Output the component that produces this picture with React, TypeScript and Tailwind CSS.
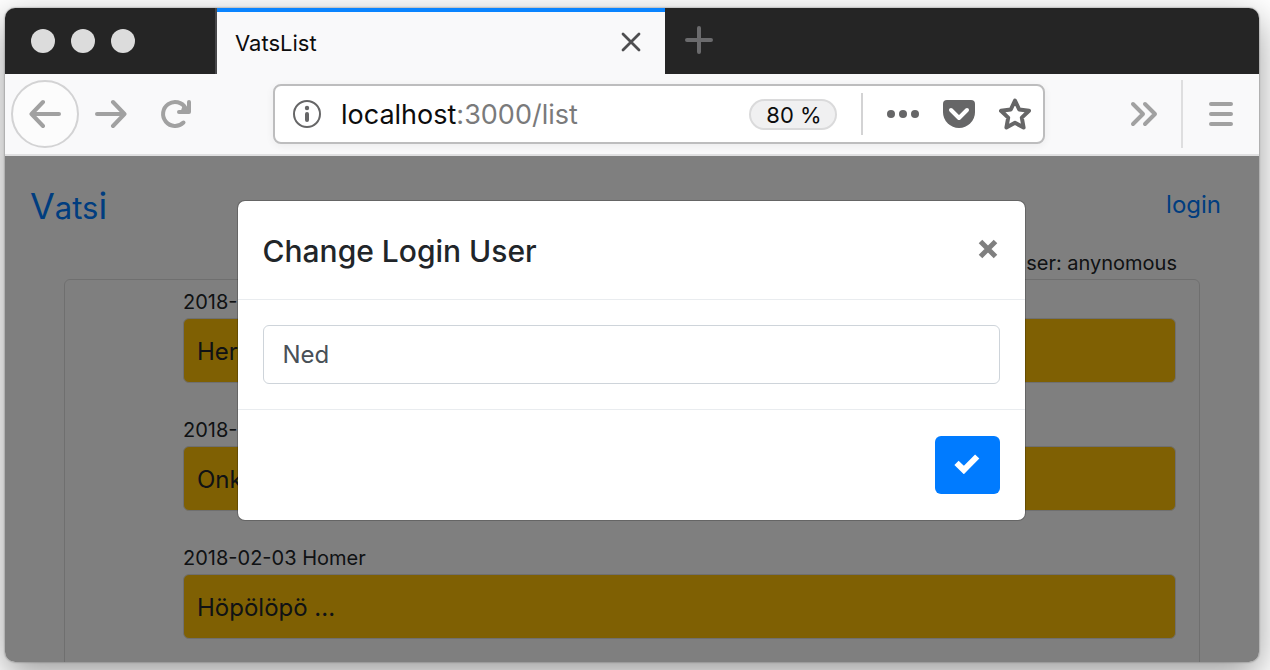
import React from "react";

const entries = [
  { meta: "2018-", text: "Her" },
  { meta: "2018-", text: "Onk" },
  { meta: "2018-02-03 Homer", text: "Höpölöpö ..." },
];

function TabBar() {
  return (
    <header className="flex h-[66px] shrink-0 bg-[#252525]">
      <div className="flex w-[212px] shrink-0 items-center gap-4 border-r-2 border-[#48484a] pl-[26px]">
        <span className="size-6 rounded-full bg-[#dcdcdc]" />
        <span className="size-6 rounded-full bg-[#dcdcdc]" />
        <span className="size-6 rounded-full bg-[#dcdcdc]" />
      </div>
      <div className="flex w-[448px] items-center justify-between border-t-4 border-[#0a84ff] bg-[#f9f9fa] pr-6 pb-0.5 pl-[18px]">
        <span className="pt-0.5 text-[22px] leading-8 text-[#0c0c0d]">VatsList</span>
        <button type="button" aria-label="Close tab" className="size-5">
          <svg viewBox="0 0 20 20" className="size-5" fill="none" stroke="#4e4e50" strokeWidth="2.8" strokeLinecap="round">
            <path d="M2 2l16 16M18 2L2 18" />
          </svg>
        </button>
      </div>
      <button type="button" aria-label="New tab" className="ml-5 flex items-center pb-0.5">
        <svg viewBox="0 0 28 28" className="size-7" fill="none" stroke="#6b6b6d" strokeWidth="4" strokeLinecap="round">
          <path d="M14 2v24M2 14h24" />
        </svg>
      </button>
    </header>
  );
}

function Toolbar() {
  return (
    <nav className="flex h-[82px] shrink-0 items-center border-b-2 border-[#e0e0e1] bg-[#f9f9fa] px-1.5">
      <button type="button" aria-label="Back" className="flex size-[68px] shrink-0 items-center justify-center rounded-full border-2 border-[#d3d3d4] bg-[#fcfcfc]">
        <svg viewBox="0 0 32 32" className="size-8" fill="none" stroke="#a1a1a1" strokeWidth="4" strokeLinecap="round" strokeLinejoin="round">
          <path d="M30 16H3M14 4L2.500 16l11.500 12" />
        </svg>
      </button>
      <button type="button" aria-label="Forward" className="flex w-16 shrink-0 justify-center">
        <svg viewBox="0 0 32 32" className="size-8" fill="none" stroke="#a1a1a1" strokeWidth="4" strokeLinecap="round" strokeLinejoin="round">
          <path d="M2 16h27M18 4l11.500 12L18 28" />
        </svg>
      </button>
      <button type="button" aria-label="Reload" className="flex w-16 shrink-0 justify-center">
        <svg viewBox="0 0 32 32" className="size-8" fill="none" stroke="#a1a1a1" strokeWidth="4" strokeLinecap="round" strokeLinejoin="round">
          <path d="M24.500 24.500A12 12 0 1 1 26.500 10" />
          <path d="M30 4v10H20" />
          <path d="M25 10l3 3h-4z" fill="#a1a1a1" />
        </svg>
      </button>
      <div className="mr-[67px] ml-[66px] flex h-[60px] min-w-0 flex-1 items-center gap-6 rounded-lg border-2 border-[#bdbdbe] bg-white pr-3 pl-[18px] shadow-[0_2px_8px_rgba(0,0,0,0.06)]">
        <div className="flex min-w-0 flex-1 items-center gap-5">
          <svg viewBox="0 0 28 28" className="size-7 shrink-0" fill="none" stroke="#666667">
            <circle cx="14" cy="14" r="13" strokeWidth="2" />
            <path d="M14 14v6" strokeWidth="4" strokeLinecap="round" />
            <circle cx="14" cy="8" r="2.200" fill="#666667" stroke="none" />
          </svg>
          <span className="truncate pt-0.5 text-[27px] leading-9 text-[#7a7a7b]">
            <span className="text-[#0c0c0d]">localhost</span>:3000/list
          </span>
        </div>
        <button type="button" className="h-[31px] w-[88px] shrink-0 rounded-full border-2 border-[#dadadb] bg-[#f0f0f1] pl-0.5 text-[22px] leading-7 text-[#0c0c0d]">
          80 %
        </button>
        <span className="h-[42px] w-0.5 bg-[#d3d3d4]" />
        <button type="button" aria-label="Page actions" className="shrink-0">
          <svg viewBox="0 0 32 32" className="size-8" fill="#666667">
            <circle cx="4" cy="16" r="4" />
            <circle cx="16" cy="16" r="4" />
            <circle cx="28" cy="16" r="4" />
          </svg>
        </button>
        <button type="button" aria-label="Save to Pocket" className="shrink-0">
          <svg viewBox="0 0 32 32" className="size-8">
            <path d="M4 2h24a4 4 0 0 1 4 4v8a16 16 0 0 1-32 0V6a4 4 0 0 1 4-4z" fill="#666667" />
            <path d="M8 12l8 8 8-8" fill="none" stroke="#fff" strokeWidth="4" strokeLinecap="round" strokeLinejoin="round" />
          </svg>
        </button>
        <button type="button" aria-label="Bookmark" className="shrink-0">
          <svg viewBox="0 0 32 32" className="size-8" fill="none" stroke="#666667" strokeWidth="4" strokeLinejoin="round">
            <path d="M16 2.500l4.200 9 9.800 1.300-7.200 6.800 1.800 9.900-8.600-4.700-8.600 4.700 1.800-9.900L2 12.800l9.800-1.300z" />
          </svg>
        </button>
      </div>
      <button type="button" aria-label="More tools" className="flex w-16 shrink-0 justify-center">
        <svg viewBox="0 0 28 28" className="size-7" fill="none" stroke="#a1a1a1" strokeWidth="4" strokeLinecap="round" strokeLinejoin="round">
          <path d="M3 4l10 10L3 24M15 4l10 10-10 10" />
        </svg>
      </button>
      <span className="mr-1.5 ml-[5px] h-[68px] w-0.5 bg-[#dededf]" />
      <button type="button" aria-label="Open menu" className="flex w-16 shrink-0 justify-center">
        <svg viewBox="0 0 24 24" className="size-6" fill="none" stroke="#a1a1a1" strokeWidth="4" strokeLinecap="round">
          <path d="M2 2h20M2 12h20M2 22h20" />
        </svg>
      </button>
    </nav>
  );
}

function ChatPage() {
  return (
    <div className="px-[25px] pt-[25px] text-[#212529]">
      <div className="flex h-12 items-center justify-between pr-[13px]">
        <a href="#home" className="pt-1 text-[31px] leading-[48px] text-[#007bff]">
          <span className="text-[36px]">V</span>ats<span className="text-[36px]">i</span>
        </a>
        <a href="#login" className="text-[24px] leading-[38px] text-[#007bff]">login</a>
      </div>
      <div className="px-[34px]">
        <p className="mt-[18px] pr-[23px] text-right text-[20px] leading-8">User: anynomous</p>
        <ul className="h-[500px] rounded-md border border-[#dfdfdf] pt-1.5 pr-[23px] pl-[118px]">
          {entries.map((entry, i) => (
            <li key={i} className="mb-[31px]">
              <p className="text-[20px] leading-8">{entry.meta}</p>
              <div className="flex h-[65px] items-center rounded-md border border-[#dfdfdf] bg-[#ffc107] pt-0.5 pl-[13px] text-[24px]">
                {entry.text}
              </div>
            </li>
          ))}
        </ul>
      </div>
    </div>
  );
}

function LoginDialog() {
  return (
    <div
      role="dialog"
      aria-labelledby="dialog-title"
      className="w-full max-w-[789px] rounded-lg border border-black/20 bg-white bg-clip-padding"
    >
      <div className="flex h-[99px] items-center justify-between border-b border-[#e9ecef] px-[25px]">
        <h2 id="dialog-title" className="pt-0.5 text-[30px] leading-[46px] font-medium text-[#212529]">
          Change Login User
        </h2>
        <button type="button" aria-label="Close" className="mr-0.5 pb-0.5">
          <svg viewBox="0 0 20 20" className="size-5" fill="none" stroke="#7f7f7f" strokeWidth="5">
            <path d="M2.500 2.500l15 15M17.500 2.500l-15 15" />
          </svg>
        </button>
      </div>
      <div className="border-b border-[#e9ecef] px-[25px] py-[25px]">
        <input
          aria-label="User name"
          defaultValue="Ned"
          className="block h-[59px] w-full rounded-md border border-[#ced4da] px-[19px] text-[24px] text-[#495057] outline-none"
        />
      </div>
      <div className="flex justify-end px-[25px] py-[26px]">
        <button type="button" aria-label="Confirm" className="flex h-[58px] w-[65px] items-center justify-center rounded-md bg-[#007bff] pb-0.5">
          <svg viewBox="0 0 26 20" className="h-5 w-[26px]" fill="none" stroke="#fff" strokeWidth="6">
            <path d="M2.500 8.800L9.800 16L23.200 2.500" />
          </svg>
        </button>
      </div>
    </div>
  );
}

export default function App() {
  return (
    <div className="h-screen overflow-hidden bg-white pt-2 pr-[11px] pb-2 pl-[5px] font-['Inter','Liberation_Sans',sans-serif]">
      <div className="flex h-full flex-col overflow-hidden rounded-[10px] shadow-[0_0_2px_rgba(0,0,0,0.5),0_12px_36px_rgba(0,0,0,0.4)]">
        <TabBar />
        <Toolbar />
        <main className="relative min-h-0 flex-1 overflow-hidden bg-white">
          <ChatPage />
          <div className="absolute inset-0 flex items-start justify-center bg-black/50 pt-11 pr-0.5">
            <LoginDialog />
          </div>
        </main>
      </div>
    </div>
  );
}
